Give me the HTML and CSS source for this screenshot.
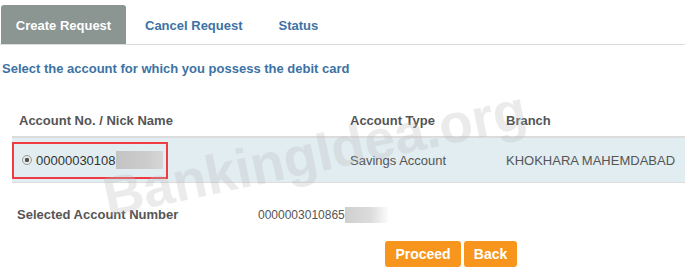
FILE: index.html
```html
<!DOCTYPE html>
<html lang="en">

<head>
    <meta charset="UTF-8">
    <meta name="viewport" content="width=device-width, initial-scale=1.0">
    <title>Debit Card Request</title>
    <link rel="stylesheet" href="styles.css">
</head>

<body>
    <div class="tabs">
        <div class="tab active">Create Request</div>
        <div class="tab">Cancel Request</div>
        <div class="tab">Status</div>
    </div>
    <p class="note">Select the account for which you possess the debit card</p>

    <div class="table">
        <div class="row head">
            <div class="col-acc">Account No. / Nick Name</div>
            <div class="col-type">Account Type</div>
            <div class="col-branch">Branch</div>
        </div>
        <div class="row data">
            <div class="col-acc">
                <div class="pick">
                    <span class="radio"></span>
                    <span>00000030108</span>
                    <span class="blur"></span>
                </div>
            </div>
            <div class="col-type">Savings Account</div>
            <div class="col-branch">KHOKHARA MAHEMDABAD</div>
        </div>
    </div>

    <div class="selected">
        <div class="sel-label">Selected Account Number</div>
        <div class="sel-value">0000003010865<span class="blur small"></span></div>
    </div>

    <div class="actions">
        <button class="btn-proceed">Proceed</button>
        <button class="btn-back">Back</button>
    </div>

    <div class="watermark">BankingIdea.org</div>
</body>

</html>
```

FILE: styles.css
```css
body {
    margin: 0;
    width: 685px;
    height: 272px;
    font-family: "Liberation Sans", Arial, sans-serif;
    background: #fff;
    overflow: hidden;
    position: relative;
}

.tabs {
    display: flex;
    height: 45px;
    padding-left: 1px;
    border-bottom: 1px solid #dcdcdc;
    box-sizing: border-box;
    align-items: flex-end;
}

.tab {
    height: 39px;
    line-height: 42px;
    font-size: 13px;
    font-weight: bold;
    color: #3d72a4;
    padding: 0 19px;
}

.tab.active {
    width: 125px;
    box-sizing: border-box;
    padding: 0;
    text-align: center;
    background: #8b9592;
    color: #fff;
    border-radius: 3px 3px 0 0;
}

.tab:nth-child(2) {
    padding: 0 17px 0 19px;
}

.note {
    margin: 16px 0 0 2px;
    font-size: 13px;
    font-weight: bold;
    color: #3d72a4;
    line-height: 16px;
}

.table {
    margin-top: 28px;
}

.row {
    display: flex;
    align-items: center;
    margin-left: 12px;
}

.row.head {
    height: 31px;
    font-size: 13px;
    font-weight: bold;
    color: #555;
}

.row.data {
    height: 44px;
    background: #e1edf1;
    border-top: 2px solid #dcdcdc;
    border-bottom: 1px solid #dcdcdc;
    font-size: 13px;
    color: #555;
}

.col-acc {
    width: 338px;
}

.head .col-acc {
    padding-left: 7px;
    width: 331px;
}

.col-type {
    width: 156px;
}

.pick {
    width: 152px;
    height: 33px;
    border: 2px solid #ef3b42;
    display: flex;
    align-items: center;
    font-size: 13px;
    color: #333;
}

.radio {
    width: 8px;
    height: 8px;
    border: 1px solid #999;
    border-radius: 50%;
    margin: 0 4px 0 8px;
    background: radial-gradient(circle, #555 0 2px, #e9e9e9 2.5px);
}

.blur {
    display: inline-block;
    width: 47px;
    height: 18px;
    background: linear-gradient(90deg, #c4c4c4, #cbcbcb 60%, #d6d6d6);
}

.selected {
    display: flex;
    align-items: center;
    margin: 24px 0 0 17px;
    font-size: 13px;
    line-height: 16px;
    color: #555;
}

.sel-label {
    width: 241px;
    font-weight: bold;
}

.sel-value {
    font-size: 12px;
}

.blur.small {
    width: 43px;
    height: 16px;
    vertical-align: top;
    background: linear-gradient(90deg, #cfcfcf, #dcdcdc 60%, #fbfbfb);
}

.actions {
    display: flex;
    gap: 3px;
    margin: 18px 0 0 385px;
}

button {
    border: none;
    background: #f7951d;
    color: #fff;
    font-family: "Liberation Sans", Arial, sans-serif;
    font-size: 14px;
    font-weight: bold;
    height: 26px;
    padding: 0;
    border-radius: 3px;
}

.btn-proceed {
    width: 76px;
}

.btn-back {
    width: 53px;
}

.watermark {
    position: absolute;
    left: 104px;
    top: 166px;
    font-size: 55px;
    font-weight: bold;
    color: rgba(190, 190, 190, 0.3);
    transform: rotate(-12deg);
    transform-origin: left center;
    pointer-events: none;
    white-space: nowrap;
}
```
